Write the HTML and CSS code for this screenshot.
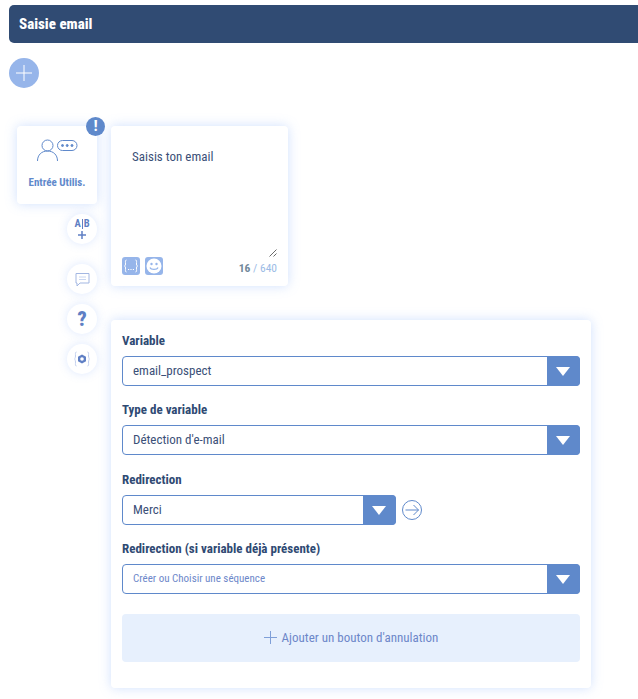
FILE: index.html
```html
<!DOCTYPE html>
<html lang="en">
<head>
  <meta charset="UTF-8">
  <title>Saisie email</title>
  <link rel="stylesheet" href="styles.css">
</head>
<body>
  <div class="page">
    <div class="title-bar">Saisie email</div>

    <button class="add-step" type="button">
      <svg width="16" height="16" viewBox="0 0 16 16"><path d="M8 0v16M0 8h16" stroke="#fff" stroke-width="1" fill="none"/></svg>
    </button>

    <div class="canvas">
      <!-- Left column: node and its tools -->
      <div class="side">
        <div class="node-card">
          <span class="badge">!</span>
          <svg class="node-icon" width="42" height="24" viewBox="0 0 42 24" fill="none" stroke="#5f89cb" stroke-width="1">
            <circle cx="10.500" cy="6.500" r="5.500"/>
            <path d="M0.500 22c0-6 4-10 10-10s10 4 10 10"/>
            <rect x="20.500" y="1.500" width="19.500" height="10" rx="5"/>
            <circle cx="25.500" cy="6.500" r="1" fill="#5f89cb"/>
            <circle cx="30.200" cy="6.500" r="1" fill="#5f89cb"/>
            <circle cx="35" cy="6.500" r="1" fill="#5f89cb"/>
          </svg>
          <div class="node-label">Entrée Utilis.</div>
        </div>

        <div class="tools">
          <button class="tool tool-ab" type="button">
            <span class="ab">A<i></i>B</span>
            <svg width="8" height="8" viewBox="0 0 8 8"><path d="M4 0v8M0 4h8" stroke="#5f7fc4" stroke-width="1.500"/></svg>
          </button>
          <button class="tool tool-gap" type="button">
            <svg width="15" height="15" viewBox="0 0 15 15" fill="none" stroke="#a3b7e2" stroke-width="1"><path d="M1 1.500h13v9.500H5l-3 3v-3H1z"/><path d="M4 5h7M4 7.500h7" stroke="#c9d6f0"/></svg>
          </button>
          <button class="tool tool-help" type="button">?</button>
          <button class="tool" type="button">
            <svg width="16" height="16" viewBox="0 0 16 16" fill="none">
              <path d="M2.500 1C1 1 1.500 3 1.500 5S.5 8 .5 8s1 1 1 3-.5 4 1 4M13.500 1c1.500 0 1 2 1 4s1 3 1 3-1 1-1 3 .5 4-1 4" stroke="#c3d0ee" stroke-width="1"/>
              <path d="M8 3.500l4 2.200v4.600l-4 2.200-4-2.200V5.700z" fill="#5f7fc4"/>
              <circle cx="8" cy="8" r="1.800" fill="#fff"/>
            </svg>
          </button>
        </div>
      </div>

      <!-- Right column: message and settings -->
      <div class="main">
        <div class="message-card">
          <p class="message-text">Saisis ton email</p>
          <svg class="resize-grip" width="8" height="8" viewBox="0 0 8 8"><path d="M0.500 7.500l7-7M4.500 7.500l3-3" stroke="#444" stroke-width="0.800"/></svg>
          <div class="message-foot">
            <span class="icon-square">
              <svg width="16" height="16" viewBox="0 0 16 16" fill="none" stroke="#fff" stroke-width="1"><path d="M3.500 2C2 2 2.500 4 2.500 6S1.500 8 1.500 8s1 0 1 2-.5 4 1 4M12.500 2c1.500 0 1 2 1 4s1 2 1 2-1 0-1 2 .5 4-1 4"/><path d="M5 11.500h6" stroke-dasharray="1.200 1.200"/></svg>
            </span>
            <span class="icon-square">
              <svg width="16" height="16" viewBox="0 0 16 16"><circle cx="8" cy="8" r="7.500" fill="#fff"/><circle cx="5.500" cy="6" r="1.200" fill="#96b5ea"/><circle cx="10.500" cy="6" r="1.200" fill="#96b5ea"/><path d="M4 9.500c1 2.500 7 2.500 8 0" stroke="#96b5ea" stroke-width="1.200" fill="none"/></svg>
            </span>
            <span class="counter"><b>16</b> / 640</span>
          </div>
        </div>

        <div class="settings-card">
          <div class="field">
            <label>Variable</label>
            <div class="select"><span>email_prospect</span><em></em></div>
          </div>
          <div class="field">
            <label>Type de variable</label>
            <div class="select"><span>Détection d'e-mail</span><em></em></div>
          </div>
          <div class="field">
            <label>Redirection</label>
            <div class="select-row">
              <div class="select select-short"><span>Merci</span><em></em></div>
              <svg width="20" height="20" viewBox="0 0 20 20" fill="none" stroke="#5f89cb" stroke-width="1"><circle cx="10" cy="10" r="9.500"/><path d="M3.500 10h13M11.500 5l5 5-5 5"/></svg>
            </div>
          </div>
          <div class="field">
            <label>Redirection (si variable déjà présente)</label>
            <div class="select select-empty"><span>Créer ou Choisir une séquence</span><em></em></div>
          </div>
          <button class="cancel-btn" type="button">
            <svg width="13" height="13" viewBox="0 0 13 13"><path d="M6.500 0v13M0 6.500h13" stroke="#7f9fd8" stroke-width="1"/></svg>
            Ajouter un bouton d'annulation
          </button>
        </div>
      </div>
    </div>
  </div>
</body>
</html>
```

FILE: styles.css
```css
* {
  box-sizing: border-box;
}

html, body {
  margin: 0;
  padding: 0;
  background: #fff;
}

body {
  font-family: Roboto, Arial, sans-serif;
  font-stretch: 75%;
  color: #2f4a73;
}

button {
  font-family: inherit;
  font-stretch: inherit;
  border: none;
  padding: 0;
  cursor: pointer;
}

.page {
  min-height: 699px;
  padding: 5px 0 0 9px;
}

/* Title */
.title-bar {
  height: 38px;
  line-height: 38px;
  padding-left: 10px;
  background-color: #304b73;
  border-radius: 5px 0 0 5px;
  color: #fff;
  font-size: 15px;
  font-weight: 800;
}

.add-step {
  display: flex;
  align-items: center;
  justify-content: center;
  width: 30px;
  height: 30px;
  margin-top: 15px;
  border-radius: 50%;
  background-color: #96b5ea;
}

/* Canvas */
.canvas {
  display: flex;
  gap: 14px;
  margin-top: 38px;
  padding-left: 8px;
}

.side {
  width: 80px;
  flex: none;
}

.node-card {
  position: relative;
  height: 78px;
  padding-top: 13px;
  background: #fff;
  border-radius: 4px;
  box-shadow: 0 0 12px rgba(120, 165, 250, 0.35);
  text-align: center;
}

.node-icon {
  display: block;
  margin-left: 20px;
}

.node-label {
  margin-top: 13px;
  color: #5f89cb;
  font-size: 11px;
  font-weight: 700;
}

.badge {
  position: absolute;
  top: -9px;
  right: -8px;
  width: 19px;
  height: 19px;
  border-radius: 50%;
  background-color: #5f89cb;
  color: #fff;
  font-size: 14px;
  font-weight: 900;
  line-height: 19px;
}

.tools {
  display: flex;
  flex-direction: column;
  align-items: flex-end;
  gap: 10px;
  margin-top: 10px;
}

.tool {
  display: flex;
  flex-direction: column;
  align-items: center;
  justify-content: center;
  width: 30px;
  height: 30px;
  border-radius: 50%;
  background: #fff;
  box-shadow: 0 0 10px rgba(120, 165, 250, 0.25);
}

.tool-ab {
  gap: 3px;
}

.tool-gap {
  margin-top: 10px;
}

.tool-help {
  color: #5f7fc4;
  font-size: 20px;
  font-weight: 900;
}

.ab {
  display: flex;
  align-items: center;
  gap: 1px;
  height: 9px;
  color: #5f7fc4;
  font-size: 10.500px;
  font-weight: 700;
}

.ab i {
  width: 1px;
  height: 10px;
  background-color: #5f7fc4;
}

/* Right column */
.main {
  width: 480px;
  flex: none;
}

.message-card {
  position: relative;
  width: 177px;
  height: 160px;
  padding: 24px 21px 0;
  background: #fff;
  border-radius: 4px;
  box-shadow: 0 0 12px rgba(120, 165, 250, 0.35);
}

.message-text {
  margin: 0;
  font-size: 13px;
  line-height: 14px;
  color: #3b5078;
}

.resize-grip {
  position: absolute;
  right: 11px;
  top: 123px;
}

.message-foot {
  position: absolute;
  left: 11px;
  right: 11px;
  bottom: 11px;
  display: flex;
  align-items: center;
  gap: 5px;
}

.icon-square {
  display: flex;
  align-items: center;
  justify-content: center;
  width: 18px;
  height: 18px;
  border-radius: 3px;
  background-color: #96b5ea;
}

.counter {
  margin-left: auto;
  padding-top: 4px;
  color: #9bbbe6;
  font-size: 11.500px;
}

.counter b {
  color: #72889a;
}

.settings-card {
  width: 480px;
  height: 368px;
  margin-top: 34px;
  padding: 14px 11px 0;
  background: #fff;
  border-radius: 4px;
  box-shadow: 0 0 12px rgba(120, 165, 250, 0.35);
}

.field {
  margin-bottom: 17.400px;
}

.field label {
  display: block;
  height: 22px;
  font-size: 13px;
  font-weight: 700;
  line-height: 14px;
  color: #2f4a73;
}

.select {
  position: relative;
  height: 30px;
  padding-left: 10px;
  border: 1px solid #5f89cb;
  border-radius: 4px;
  background: #fff;
  font-size: 13px;
  line-height: 28px;
  color: #3b5078;
}

.select em {
  position: absolute;
  top: -1px;
  right: -1px;
  bottom: -1px;
  width: 33px;
  border-radius: 0 4px 4px 0;
  background-color: #5f89cb;
}

.select em::after {
  content: "";
  position: absolute;
  left: 9px;
  top: 11px;
  border-left: 7px solid transparent;
  border-right: 7px solid transparent;
  border-top: 9px solid #fff;
}

.select-row {
  display: flex;
  align-items: center;
  gap: 6px;
}

.select-short {
  width: 274px;
}

.select-empty {
  font-size: 11px;
  line-height: 28px;
  color: #6d87c9;
}

.cancel-btn {
  display: flex;
  align-items: center;
  justify-content: center;
  gap: 5px;
  width: 100%;
  height: 48px;
  margin-top: 20px;
  padding-bottom: 2px;
  border-radius: 4px;
  background-color: #e7f0fd;
  color: #6d87c9;
  font-size: 13px;
}
```
